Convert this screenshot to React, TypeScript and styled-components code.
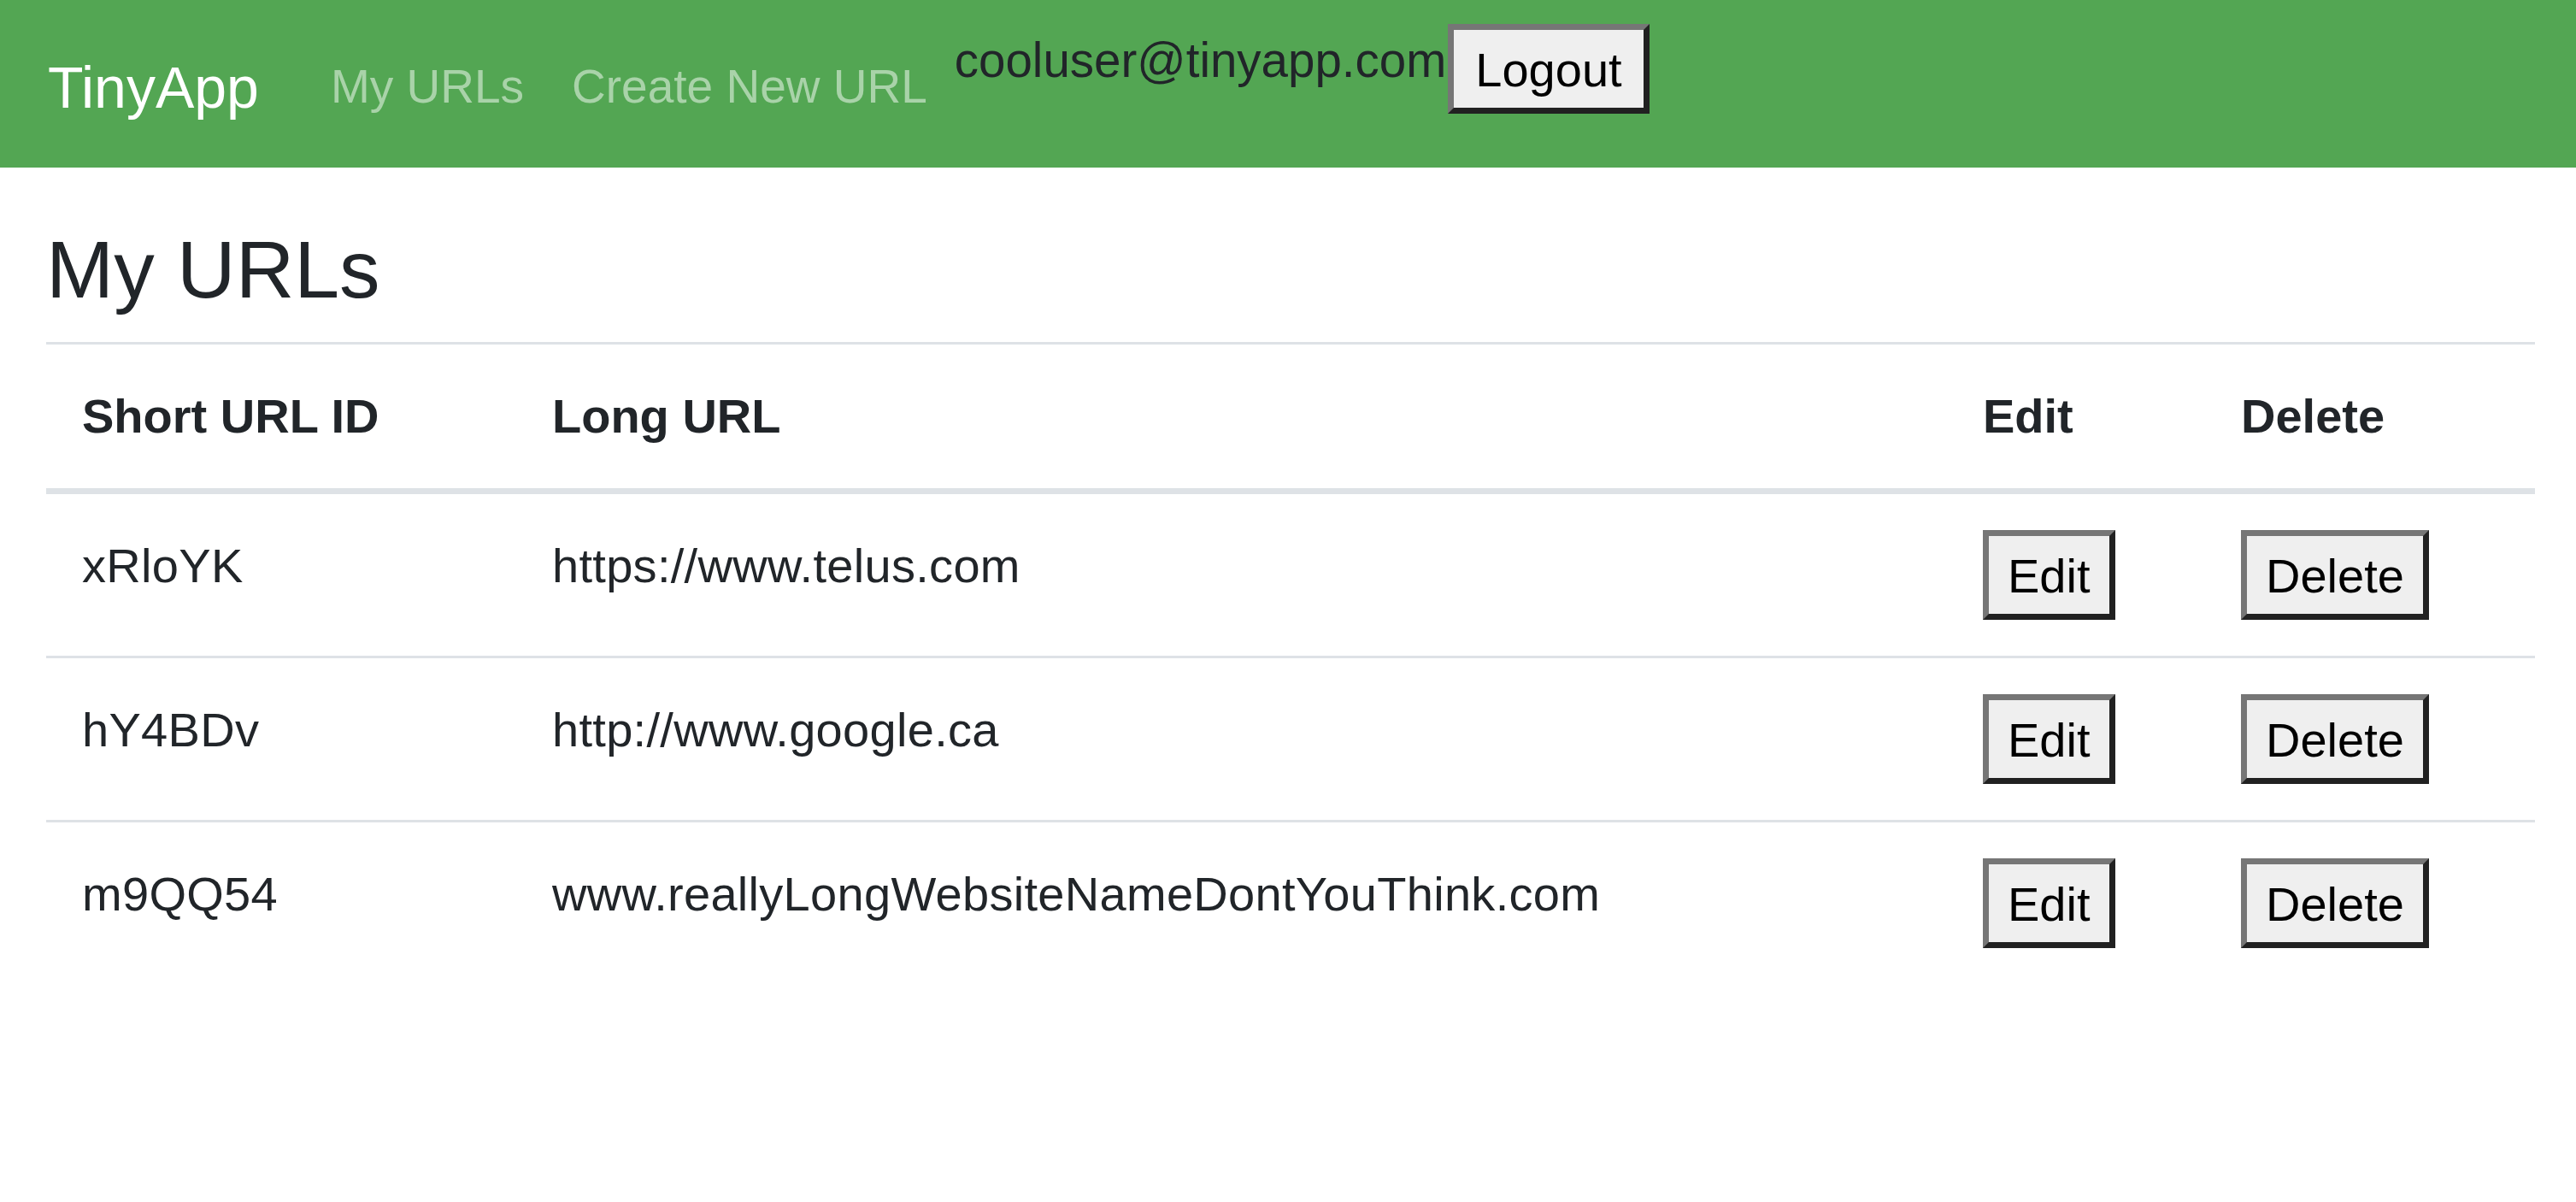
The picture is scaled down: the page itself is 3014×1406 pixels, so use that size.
import React from 'react'
import styled, { createGlobalStyle } from 'styled-components'

type UrlEntry = {
  id: string
  longURL: string
}

const urls: UrlEntry[] = [
  { id: 'xRloYK', longURL: 'https://www.telus.com' },
  { id: 'hY4BDv', longURL: 'http://www.google.ca' },
  { id: 'm9QQ54', longURL: 'www.reallyLongWebsiteNameDontYouThink.com' },
]

const columns = [
  { label: 'Short URL ID', width: 550 },
  { label: 'Long URL', width: 1674 },
  { label: 'Edit', width: 302 },
  { label: 'Delete', width: 386 },
]

export default function App() {
  return (
    <>
      <GlobalStyle />
      <Navbar>
        <Brand href="#">TinyApp</Brand>
        <NavList>
          <li>
            <NavLink href="#">My URLs</NavLink>
          </li>
          <li>
            <NavLink href="#">Create New URL</NavLink>
          </li>
        </NavList>
        <UserArea>
          <UserEmail>cooluser@tinyapp.com</UserEmail>
          <Button $top type="button">
            Logout
          </Button>
        </UserArea>
      </Navbar>

      <Main>
        <Title>My URLs</Title>
        <UrlTable>
          <thead>
            <tr>
              {columns.map((col) => (
                <HeadCell key={col.label} $width={col.width}>
                  {col.label}
                </HeadCell>
              ))}
            </tr>
          </thead>
          <tbody>
            {urls.map((url) => (
              <tr key={url.id}>
                <Cell>{url.id}</Cell>
                <Cell>{url.longURL}</Cell>
                <Cell>
                  <Button type="button">Edit</Button>
                </Cell>
                <Cell>
                  <Button type="button">Delete</Button>
                </Cell>
              </tr>
            ))}
          </tbody>
        </UrlTable>
      </Main>
    </>
  )
}

const GlobalStyle = createGlobalStyle`
  html, body {
    margin: 0;
    padding: 0;
    background: #fff;
  }
  body {
    font-family: "Liberation Sans", Arial, sans-serif;
    font-size: 56px;
    line-height: 84px;
    color: #212529;
  }
`

const Navbar = styled.nav`
  display: flex;
  align-items: flex-start;
  height: 196px;
  padding: 0 56px;
  background: #53a653;
  box-sizing: border-box;
`

const Brand = styled.a`
  padding-top: 68px;
  margin-right: 56px;
  font-size: 68px;
  line-height: 68px;
  color: #fff;
  text-decoration: none;
  white-space: nowrap;
`

const NavList = styled.ul`
  display: flex;
  margin: 0;
  padding: 0;
  list-style: none;
`

const NavLink = styled.a`
  display: block;
  padding: 74px 28px 0;
  font-size: 55px;
  line-height: 55px;
  color: rgba(255, 255, 255, 0.5);
  text-decoration: none;
  white-space: nowrap;
`

const UserArea = styled.div`
  display: flex;
  align-items: flex-start;
  margin-left: 4px;
`

const UserEmail = styled.span`
  padding-top: 43px;
  font-size: 56.5px;
  line-height: 56px;
  color: #212529;
  white-space: nowrap;
`

const Button = styled.button<{ $top?: boolean }>`
  display: inline-block;
  vertical-align: top;
  margin: ${({ $top }) => ($top ? '28px 0 0 2px' : '0')};
  padding: ${({ $top }) => ($top ? '5px 25px 2px' : '5px 22px 2px')};
  font-family: "Liberation Sans", Arial, sans-serif;
  font-size: 56px;
  line-height: 84px;
  color: #000;
  background: #efefef;
  border: 7px solid;
  border-color: #767676 #212121 #212121 #767676;
  border-radius: 0;
  cursor: pointer;
`

const Main = styled.main`
  padding: 0 48px 0 54px;
`

const Title = styled.h1`
  margin: 62px 0 28px;
  font-size: 95px;
  font-weight: 500;
  line-height: 1.2;
  color: #212529;
`

const UrlTable = styled.table`
  width: 100%;
  border-collapse: collapse;
  color: #212529;
`

const HeadCell = styled.th<{ $width: number }>`
  width: ${({ $width }) => $width}px;
  padding: 42px;
  text-align: left;
  vertical-align: bottom;
  font-weight: 700;
  border-top: 3.5px solid #dee2e6;
  border-bottom: 7px solid #dee2e6;
  box-sizing: border-box;
`

const Cell = styled.td`
  padding: 42px;
  vertical-align: top;
  border-top: 3.5px solid #dee2e6;
  white-space: nowrap;
  letter-spacing: 0.3px;
`
